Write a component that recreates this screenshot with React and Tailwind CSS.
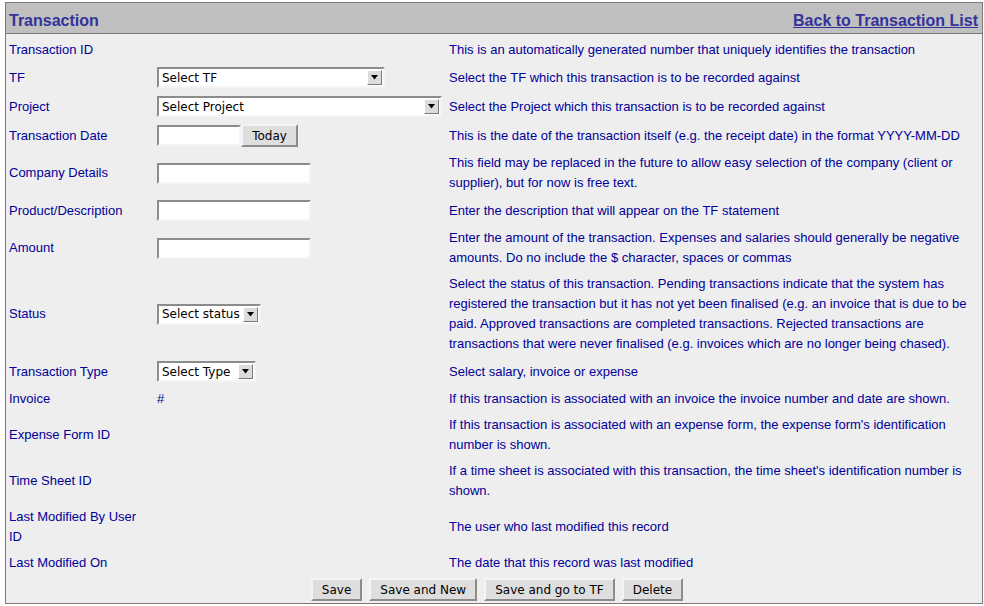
import React from "react";

const label = "pl-[3px] pr-[8px] py-[2px] text-[#000099] leading-[20px] flex items-center";
const help = "py-[2px] pr-[5px] text-[#000099] leading-[20px] flex items-center";
const field = "py-[2px] flex items-center";
const ctrlFont = "font-['DejaVu_Sans',sans-serif] text-[12px]";

function Select({ text, width }) {
	return (
		<div className="my-[1px] flex items-center h-[21px] bg-white border-2 border-t-[#8c8c8c] border-l-[#8c8c8c] border-b-[#f4f4f4] border-r-[#f4f4f4]" style={{ width }}>
			<span className={"flex-1 pl-[3px] text-black leading-none whitespace-nowrap " + ctrlFont}>{text}</span>
			<div className="w-[15px] h-[15px] mr-[1px] bg-[#dcdcdc] border border-t-white border-l-white border-b-[#7a7a7a] border-r-[#7a7a7a] flex items-center justify-center">
				<svg width="7" height="5" viewBox="0 0 7 5"><polygon points="0,0 7,0 3.5,4.5" fill="#000" /></svg>
			</div>
		</div>
	);
}

function TextBox({ width = 154 }) {
	return <div className="my-[1px] h-[21px] bg-white border-2 border-t-[#8c8c8c] border-l-[#8c8c8c] border-b-[#f4f4f4] border-r-[#f4f4f4]" style={{ width }}></div>;
}

function Button({ children, className = "" }) {
	return (
		<button className={"h-[23px] px-[9px] bg-[#dedede] text-black border-2 border-t-[#f4f4f4] border-l-[#f4f4f4] border-b-[#8c8c8c] border-r-[#8c8c8c] leading-none " + ctrlFont + " " + className}>
			{children}
		</button>
	);
}

const rows = [
	{ label: "Transaction ID", help: "This is an automatically generated number that uniquely identifies the transaction" },
	{ label: "TF", input: <Select text="Select TF" width={228} />, help: "Select the TF which this transaction is to be recorded against" },
	{ label: "Project", input: <Select text="Select Project" width={285} />, help: "Select the Project which this transaction is to be recorded against" },
	{
		label: "Transaction Date",
		input: (
			<div className="flex items-center">
				<TextBox width={84} />
				<Button className="w-[57px] h-[22px] px-0">Today</Button>
			</div>
		),
		help: "This is the date of the transaction itself (e.g. the receipt date) in the format YYYY-MM-DD",
	},
	{ label: "Company Details", input: <TextBox />, help: "This field may be replaced in the future to allow easy selection of the company (client or supplier), but for now is free text." },
	{ label: "Product/Description", input: <TextBox />, help: "Enter the description that will appear on the TF statement" },
	{ label: "Amount", input: <TextBox />, help: "Enter the amount of the transaction. Expenses and salaries should generally be negative amounts. Do no include the $ character, spaces or commas" },
	{ label: "Status", input: <Select text="Select status" width={104} />, help: "Select the status of this transaction. Pending transactions indicate that the system has registered the transaction but it has not yet been finalised (e.g. an invoice that is due to be paid. Approved transactions are completed transactions. Rejected transactions are transactions that were never finalised (e.g. invoices which are no longer being chased)." },
	{ label: "Transaction Type", input: <Select text="Select Type" width={99} />, help: "Select salary, invoice or expense" },
	{ label: "Invoice", input: <span className="text-[#000099]">#</span>, help: "If this transaction is associated with an invoice the invoice number and date are shown." },
	{ label: "Expense Form ID", help: "If this transaction is associated with an expense form, the expense form's identification number is shown." },
	{ label: "Time Sheet ID", help: "If a time sheet is associated with this transaction, the time sheet's identification number is shown." },
	{ label: "Last Modified By User ID", help: "The user who last modified this record" },
	{ label: "Last Modified On", help: "The date that this record was last modified" },
];

export default function App() {
	return (
		<div className="w-[984px] h-[606px] bg-white pt-[2px] pl-[5px] font-['Liberation_Sans',Arial,sans-serif] text-[13px]">
			<div className="w-[978px] border border-[#7a7a7a] bg-[#eeeeee]">
				<div className="h-[31px] bg-[#c0c0c0] border-b border-[#7a7a7a] flex items-center justify-between pl-[3px] pr-[4px] pt-[5px]">
					<span className="text-[16px] font-bold text-[#333399]">Transaction</span>
					<a href="#" className="text-[16px] font-bold text-[#333399] underline">Back to Transaction List</a>
				</div>
				<div className="grid grid-cols-[151px_292px_1fr] gap-y-[2px] pt-[4px]">
					{rows.map((r) => (
						<React.Fragment key={r.label}>
							<div className={label}>{r.label}</div>
							<div className={field}>{r.input}</div>
							<div className={help}>{r.help}</div>
						</React.Fragment>
					))}
				</div>
				<div className="flex justify-center gap-[7px] pt-[3px] pb-[2px] pl-[6px]">
					<Button>Save</Button>
					<Button>Save and New</Button>
					<Button>Save and go to TF</Button>
					<Button>Delete</Button>
				</div>
			</div>
		</div>
	);
}
